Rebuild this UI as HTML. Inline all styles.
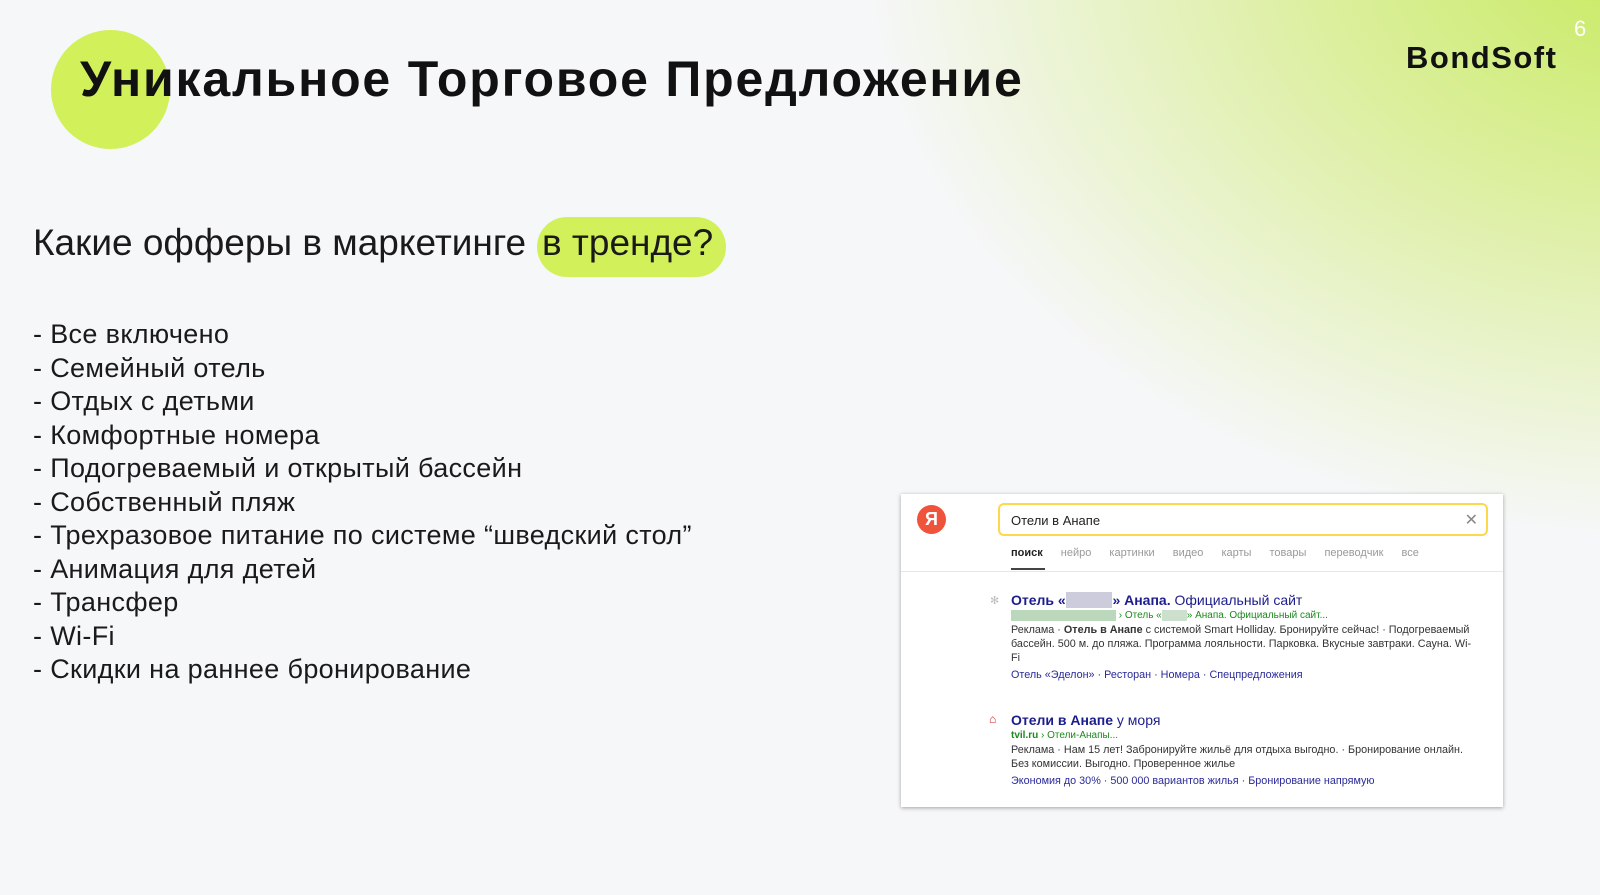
<!DOCTYPE html>
<html><head><meta charset="utf-8"><style>
*{margin:0;padding:0;box-sizing:border-box}
body{width:1600px;height:895px;overflow:hidden;position:relative;font-family:"Liberation Sans",sans-serif;
background:radial-gradient(ellipse 1000px 750px at 1660px -60px,#c6ea5a 0%,#dcef9e 35%,rgba(246,247,249,0) 80%),#f6f7f9;}
.abs{position:absolute}
.circ{left:51px;top:30px;width:119px;height:119px;border-radius:50%;background:#d2f05a}
h1{position:absolute;left:80px;top:50px;font-size:50px;font-weight:bold;color:#111;letter-spacing:1.8px;white-space:nowrap}
.sub{top:222px;font-size:37px;color:#1a1a1a;white-space:nowrap}
.pill{left:537px;top:217px;width:189px;height:60px;border-radius:30px;background:#d2f05a}
.list{left:33px;top:318px;font-size:27px;letter-spacing:0.35px;line-height:33.5px;color:#1a1a1a}
.panel{left:901px;top:494px;width:602px;height:313px;background:#fff;box-shadow:0 1px 4px rgba(0,0,0,.35);font-size:11px;color:#333}
.ya{left:16px;top:11px;width:29px;height:29px;border-radius:50%;background:#f0533c;color:#fff;font-weight:bold;font-size:18px;text-align:center;line-height:29px}
.sb{left:97px;top:9px;width:490px;height:33px;border:2px solid #fcd84a;border-radius:6px;font-size:13px;padding:8px 11px;color:#222}
.tabs{left:110px;top:53px;font-size:11px;color:#999;word-spacing:15px}
.hr{left:0;top:77px;width:602px;height:1px;background:#e8e8e8}
.t{color:#1c1c8c;font-size:14px}
.g{color:#1b8a1b}
.l{color:#2a2a9a}
</style></head><body>
<div class="abs circ"></div>
<h1>Уникальное Торговое Предложение</h1>
<div class="abs" style="left:1406px;top:40px;font-size:31px;font-weight:bold;color:#111;letter-spacing:1.5px">BondSoft</div>
<div class="abs" style="left:1574px;top:16px;font-size:22px;color:#fff">6</div>
<div class="abs pill"></div>
<div class="abs sub" style="left:33px">Какие офферы в маркетинге</div>
<div class="abs sub" style="left:542px">в тренде?</div>
<div class="abs list">- Все включено<br>- Семейный отель<br>- Отдых с детьми<br>- Комфортные номера<br>- Подогреваемый и открытый бассейн<br>- Собственный пляж<br>- Трехразовое питание по системе “шведский стол”<br>- Анимация для детей<br>- Трансфер<br>- Wi-Fi<br>- Скидки на раннее бронирование</div>
<div class="abs panel">
 <div class="abs ya">Я</div>
 <div class="abs sb">Отели в Анапе<span style="position:absolute;right:8px;top:5px;font-size:16px;color:#888">✕</span></div>
 <div class="abs tabs"><b style="color:#222">поиск</b> нейро картинки видео карты товары переводчик все</div>
 <div class="abs" style="left:110px;top:74px;width:34px;height:2px;background:#444"></div>
 <div class="abs hr"></div>
 <div class="abs" style="left:89px;top:100px;color:#bbb">✻</div>
 <div class="abs" style="left:110px;top:99px;width:465px;line-height:15px">
  <div class="t"><b>Отель «<span style="background:#ccd;color:#ccd">xxxxxx</span>» Анапа.</b> Официальный сайт</div>
  <div class="g" style="font-size:10px"><span style="background:#bcd8bc;color:#bcd8bc">xxxxxxxxxxxxxxxxxxxxx</span> › Отель «<span style="background:#cde0cd;color:#cde0cd">xxxxx</span>» Анапа. Официальный сайт...</div>
  <div style="font-size:10.8px;line-height:14px">Реклама · <b>Отель в Анапе</b> с системой Smart Holliday. Бронируйте сейчас! · Подогреваемый бассейн. 500 м. до пляжа. Программа лояльности. Парковка. Вкусные завтраки. Сауна. Wi-Fi</div>
  <div class="l" style="font-size:10.8px;margin-top:3px">Отель «Эделон» · Ресторан · Номера · Спецпредложения</div>
 </div>
 <div class="abs" style="left:88px;top:218px;color:#c22;font-size:12px">⌂</div>
 <div class="abs" style="left:110px;top:219px;width:455px;line-height:15px">
  <div class="t"><b>Отели в Анапе</b> у моря</div>
  <div class="g" style="font-size:10px"><b>tvil.ru</b> › Отели-Анапы...</div>
  <div style="font-size:10.8px;line-height:14px">Реклама · Нам 15 лет! Забронируйте жильё для отдыха выгодно. · Бронирование онлайн. Без комиссии. Выгодно. Проверенное жилье</div>
  <div class="l" style="font-size:10.8px;margin-top:3px">Экономия до 30% · 500 000 вариантов жилья · Бронирование напрямую</div>
 </div>
</div>
</body></html>
